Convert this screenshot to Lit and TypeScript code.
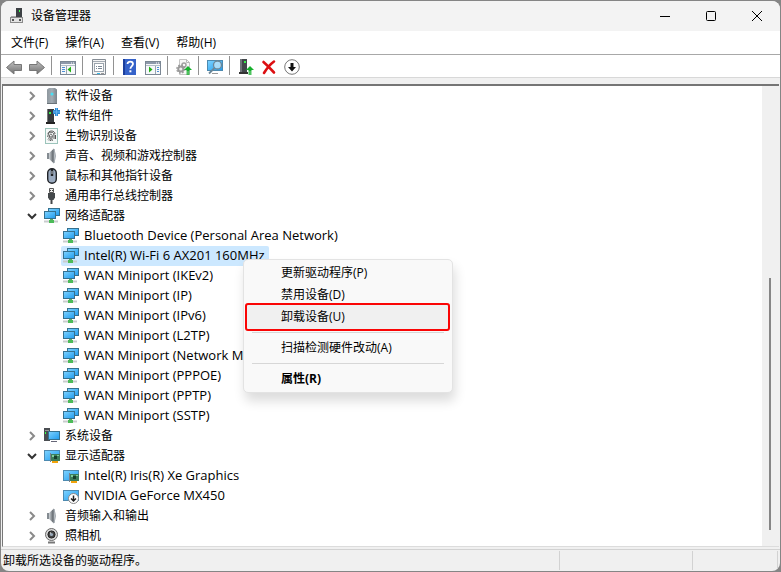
import { LitElement, html, svg, css, nothing } from "lit";
import { customElement, state } from "lit/decorators.js";
import { classMap } from "lit/directives/class-map.js";

const gradients = svg`
  <linearGradient id="sky" x1="0" y1="0" x2="1" y2="1"><stop offset="0" stop-color="#7fd3ff"/><stop offset="1" stop-color="#1e9bee"/></linearGradient>
  <linearGradient id="metal" x1="0" y1="0" x2="1" y2="0"><stop offset="0" stop-color="#8e979e"/><stop offset=".5" stop-color="#a4adb4"/><stop offset="1" stop-color="#7a838a"/></linearGradient>
  <linearGradient id="cone" x1="0" y1="0" x2="1" y2="0"><stop offset="0" stop-color="#cfd4d8"/><stop offset="1" stop-color="#4a5056"/></linearGradient>
  <linearGradient id="arrow" x1="0" y1="0" x2="0" y2="1"><stop offset="0" stop-color="#c2c2c2"/><stop offset="1" stop-color="#6f6f6f"/></linearGradient>`;

const greenUp = svg`<path d="M12 7l4 4h-2.500v1h-3v-1H8z" fill="#16b02c"/><path d="M10.500 13h3M10.500 15h3" stroke="#16b02c" stroke-width="1.300"/>`;
const pane = svg`<rect x=".5" y="2.500" width="15" height="13" fill="#f6f8fa" stroke="#7b8794"/><path d="M1 3h14v2H1z" fill="#8d98aa"/><path d="M11 4h1M13 4h1" stroke="#fff"/><path d="M1 6.500h14" stroke="#b3bdc8"/>`;
const screen = svg`<rect x=".5" y="2.500" width="15" height="10" fill="url(#sky)" stroke="#4d8ab0"/>`;
const card = svg`<path d="M6.500 5v9" stroke="#79838b"/><rect x="7" y="6" width="9" height="7" fill="#3d7d5b"/><path d="M8 7h2v2H8zM13 7h2v1h-2z" fill="#7fd09d"/><rect x="10" y="8" width="3" height="3" fill="#173f2c"/><path d="M8 13h6v2H8z" fill="#f1a30b"/>`;

const icons: Record<string, unknown> = {
  app: svg`<rect x="7" y="0" width="6" height="10" fill="#3d4145"/><rect x="10" y="2" width="1" height="2" fill="#3bff4c"/><rect x="1.500" y="9.500" width="12" height="5" fill="#e2e2e2" stroke="#8b8b8b"/><path d="M3 11h2v2H3zM10 11h2v2h-2z" fill="#555"/><path d="M2 8.500h5" stroke="#aaa"/>`,
  back: svg`<path d="M.5 8.500L8 2v3.500h7.500v6H8V15z" fill="url(#arrow)" stroke="#777"/>`,
  forward: svg`<path d="M15.500 8.500L8 2v3.500H.5v6H8V15z" fill="url(#arrow)" stroke="#777"/>`,
  tree: svg`${pane}<path d="M6.500 7v8" stroke="#9aa5b0"/><path d="M2 8.500h3M2 10.500h3M2 12.500h3" stroke="#4e8fd6"/><path d="M11 7.500v6L7.500 10.500z" fill="#22b014"/>`,
  props: svg`<path d="M1.500.5h13v15h-13z" fill="#f4f4f4" stroke="#858c94"/><path d="M2 2.500h12" stroke="#a4abb3"/><rect x="3.500" y="4.500" width="9" height="8" fill="#fff" stroke="#9ca5ae"/><path d="M5 7.500h1M7 7.500h4M5 9.500h1M7 9.500h4" stroke="#7b8794"/><path d="M6 14.500h3" stroke="#33b8ea"/><path d="M10 14.500h3" stroke="#999"/>`,
  help: svg`<rect x="1" y="0" width="13" height="16" fill="#3562c9"/><path d="M1 0h2v16H1z" fill="#1c3f9c"/><path d="M5.500 5c0-3.300 5.500-3.300 5.500 0 0 2-2.600 2.200-2.600 4.800" fill="none" stroke="#fff" stroke-width="1.800"/><rect x="7.400" y="11.300" width="2" height="2" fill="#fff"/>`,
  list: svg`${pane}<path d="M10.500 7v8" stroke="#9aa5b0"/><path d="M12 8.500h2M12 10.500h2M12 12.500h2" stroke="#4e8fd6"/><path d="M4 7.500v6L7.500 10.500z" fill="#22b014"/>`,
  update: svg`<path d="M3.500.5h7l3 3v12h-10z" fill="#f7f7f7" stroke="#c4c4c4"/><path d="M10.500.5v3h3" fill="none" stroke="#b7b7b7"/><circle cx="8" cy="6" r="2" fill="none" stroke="#a0a0a0" stroke-width="1.500"/><circle cx="4.800" cy="10" r="2.600" fill="#eee" stroke="#999" stroke-width="2"/><circle cx="4.800" cy="10" r="4" fill="none" stroke="#999" stroke-width="1.300" stroke-dasharray="1.700 1.440"/>${greenUp}`,
  scan: svg`<rect x=".5" y="1.500" width="15" height="10" fill="url(#sky)" stroke="#4d8ab0"/><path d="M5 14.500h6" stroke="#999"/><circle cx="10.500" cy="6" r="4" fill="#bfe6fb" fill-opacity=".8" stroke="#6c8798" stroke-width="1.300"/><path d="M7.500 9L2 14.500" stroke="#6c8798" stroke-width="1.800"/>`,
  driver: svg`<path d="M2 0h7v13H2z" fill="#43484c"/><path d="M2 0h2v13H2z" fill="#70757a"/><rect x="6" y="2" width="2" height="2" fill="#39f04b"/><path d="M1 14h9" stroke="#333" stroke-width="2"/>${greenUp}`,
  remove: svg`<path d="M2.500 3q4 3.500 10.500 10.500M13 2.500Q8 6 3 14" fill="none" stroke="#dc0f12" stroke-width="2.600" stroke-linecap="round"/>`,
  down: svg`<circle cx="8" cy="8" r="7.300" fill="#fff" stroke="#777"/><path d="M6.500 4h3v4H12l-4 4.500L4 8h2.500z" fill="#111"/>`,
  tower: svg`<path d="M3 1.500L5 0h6l2 1.500V15H3z" fill="url(#metal)"/><path d="M3 15.500h10" stroke="#6a7379"/><circle cx="8" cy="6" r="1.500" fill="#45e0f5"/>`,
  component: svg`<path d="M3 1h7v13H3z" fill="#363a3d"/><path d="M3 1h1v13H3z" fill="#777"/><path d="M2 15h9" stroke="#222" stroke-width="2"/><rect x="5" y="4" width="2" height="2" fill="#39f04b"/><path d="M9 2h2V0h3v2h2v4h-2v2h-3V6H9z" fill="#2e8ad4"/><path d="M12.500 0v8M9 4h7" stroke="#64b4ee"/>`,
  finger: svg`<rect x="1.500" y=".5" width="12" height="15" fill="#f5f9f8" stroke="#9cc4bb"/><path d="M4 6c0-4 7-4 7 0M3.500 9c1-1 0-3 2-4.500 1.700-1 4.500 0 4.500 2.500v4M4 11.500C6 10 5 8 5.800 6.700c.7-1 2.500-.5 2.500 1 0 2-.5 3.600-2.300 5.300M7 8c0 2-.4 3-2 4.500M11.500 7v4M8.500 11.500L8 13" fill="none" stroke="#555"/>`,
  speaker: svg`<path d="M3 5h2v6H3z" fill="#858c92"/><path d="M5 5l5-4.500v15L5 11z" fill="url(#cone)"/><path d="M10 1q3 7 0 14z" fill="#d3d7da" stroke="#a5acb2"/>`,
  mouse: svg`<rect x="3.700" y=".7" width="8.600" height="14.600" rx="4.300" fill="#9babc0" stroke="#202327" stroke-width="1.400"/><path d="M8 1v7" stroke="#202327" stroke-width="2.400"/><path d="M8 3v3" stroke="#c5ced8"/>`,
  usb: svg`<path d="M5.500.5h4v4h-4z" fill="#eee" stroke="#555"/><path d="M6 2.500h1M8 2.500h1" stroke="#444"/><path d="M4 5h7v4.500L9.500 12h-4L4 9.500z" fill="#44484b"/><path d="M7.500 12v4" stroke="#44484b" stroke-width="2"/>`,
  network: svg`<path d="M0 13.500h5M10 13.500h4" stroke="#c9ccce" stroke-width="2"/><path d="M5 12h5v3H5z" fill="#4cbb58"/><path d="M6 10h3v2H6z" fill="#5da868"/><rect x="4.500" y=".5" width="11" height="7" fill="url(#sky)" stroke="#35718f"/><rect x=".5" y="3.500" width="11" height="7" fill="url(#sky)" stroke="#35718f"/>`,
  system: svg`<path d="M0 0h6v13H0z" fill="#4a4e52"/><path d="M1 2.500h4" stroke="#999"/><rect x="1" y="4" width="1" height="2" fill="#3f4"/><rect x="4.500" y="3.500" width="11" height="8" fill="url(#sky)" stroke="#35718f"/><path d="M7 13.500h6" stroke="#667"/>`,
  display: svg`${screen}${card}`,
  disabled: svg`${screen}<circle cx="10.500" cy="10.500" r="5" fill="#fff" stroke="#888"/><path d="M10.500 7.500v5M8 10.500l2.500 2.500 2.500-2.500" fill="none" stroke="#222" stroke-width="1.500"/>`,
  camera: svg`<path d="M4 14.500h7" stroke="#777" stroke-width="2"/><circle cx="7.500" cy="6.500" r="6" fill="#dadada" stroke="#6a6a6a"/><circle cx="7.500" cy="6.500" r="3.600" fill="#444" stroke="#222"/><circle cx="7.500" cy="6.500" r="1.600" fill="#9ab"/><path d="M6 5h1" stroke="#fff"/>`,
};

const icon = (name: string) => html`<svg class="icon" viewBox="0 0 16 16" aria-hidden="true">
  <defs>${gradients}</defs>${icons[name]}
</svg>`;

interface Device { label: string; icon: string; selected?: boolean; }
interface Category { label: string; icon: string; open?: boolean; devices?: Device[]; }

const net = (label: string, selected = false): Device => ({ label, icon: "network", selected });

const categories: Category[] = [
  { label: "软件设备", icon: "tower" },
  { label: "软件组件", icon: "component" },
  { label: "生物识别设备", icon: "finger" },
  { label: "声音、视频和游戏控制器", icon: "speaker" },
  { label: "鼠标和其他指针设备", icon: "mouse" },
  { label: "通用串行总线控制器", icon: "usb" },
  {
    label: "网络适配器", icon: "network", open: true,
    devices: [
      net("Bluetooth Device (Personal Area Network)"),
      net("Intel(R) Wi-Fi 6 AX201 160MHz", true),
      net("WAN Miniport (IKEv2)"),
      net("WAN Miniport (IP)"),
      net("WAN Miniport (IPv6)"),
      net("WAN Miniport (L2TP)"),
      net("WAN Miniport (Network Monitor)"),
      net("WAN Miniport (PPPOE)"),
      net("WAN Miniport (PPTP)"),
      net("WAN Miniport (SSTP)"),
    ],
  },
  { label: "系统设备", icon: "system" },
  {
    label: "显示适配器", icon: "display", open: true,
    devices: [
      { label: "Intel(R) Iris(R) Xe Graphics", icon: "display" },
      { label: "NVIDIA GeForce MX450", icon: "disabled" },
    ],
  },
  { label: "音频输入和输出", icon: "speaker" },
  { label: "照相机", icon: "camera" },
];

const tools: [string, string][][] = [
  [["back", "后退"], ["forward", "前进"]],
  [["tree", "显示/隐藏控制台树"]],
  [["props", "属性"]],
  [["help", "帮助"], ["list", "显示/隐藏操作窗格"]],
  [["update", "更新驱动程序"]],
  [["scan", "扫描检测硬件改动"]],
  [["driver", "更新设备驱动程序"], ["remove", "卸载设备"], ["down", "禁用设备"]],
];

@customElement("app-root")
export class AppRoot extends LitElement {
  @state() private collapsed = new Set(categories.filter((c) => !c.open).map((c) => c.label));

  static styles = css`
    :host {
      display: flex;
      min-height: 100vh;
      box-sizing: border-box;
      background: #858585;
      padding: 1px;
      font: 12px/20px "Open Sans", "Noto Sans CJK SC", sans-serif;
      color: #000;
    }
    * { box-sizing: border-box; }
    button { font: inherit; color: inherit; background: none; border: 0; padding: 0; margin: 0; text-align: left; }
    ul { list-style: none; margin: 0; padding: 0; }
    .icon { width: 16px; height: 16px; display: block; flex: none; }
    .window { flex: 1; min-width: 0; display: flex; flex-direction: column; background: #f0f0f0; border-radius: 8px; overflow: hidden; }
    .titlebar { display: flex; align-items: center; height: 30px; background: #f3f3f3; padding-left: 8px; }
    .titlebar h1 { flex: 1; margin: 0 0 0 6px; font-size: 12px; font-weight: 400; }
    .control { width: 46px; height: 30px; display: grid; place-items: center; }
    .control svg { width: 12px; height: 12px; fill: none; stroke: #000; }
    .menubar { display: flex; gap: 1px; height: 24px; background: #fff; border-bottom: 1px solid #a8a8a8; padding-left: 2px; }
    .menubar button { padding: 0 8px; }
    .toolbar { display: flex; align-items: center; height: 23px; background: #fff; border-bottom: 1px solid #d8d8d8; padding-left: 1px; }
    .group { display: flex; }
    .group + .group::before { content: ""; width: 1px; height: 19px; margin: 0 4px 0 3px; background: #929292; }
    .group button { width: 23px; height: 20px; padding: 3px 3px 1px 4px; }
    .client { flex: 1; display: flex; margin: 6px 1px 2px 1px; border-top: 2px solid #757575; border-left: 1px solid #777; border-bottom: 1px solid #dcdcdc; background: #fff; }
    .tree { flex: 1; min-width: 0; position: relative; padding-left: 22px; }
    .row { display: flex; align-items: center; height: 20px; white-space: nowrap; }
    .expander { width: 14px; height: 20px; display: grid; place-items: center; margin-right: 5px; }
    .expander svg { width: 10px; height: 10px; fill: none; stroke: #8a8a8a; stroke-width: 2; }
    .expander.open svg { stroke: #333; }
    .label { padding: 0 4px 0 5px; }
    .device { width: max-content; margin-left: 36px; padding-left: 2px; border-radius: 2px; font-family: "Open Sans", "Noto Sans CJK SC", sans-serif; font-size: 13px; }
    .device .label { line-height: 18px; padding-bottom: 2px; }
    .device.selected { background: #cce8ff; }
    .scrollbar { width: 17px; background: #f0f0f0; display: grid; grid-template-rows: 192fr 252fr 16fr; }
    .thumb { grid-row: 2; width: 2px; margin-left: 7px; background: #868686; }
    .context {
      position: absolute; left: 240px; top: 173px; width: 210px; padding: 2px 1px;
      background: #f9f9f9; border: 1px solid #e3e3e3; border-radius: 5px;
      box-shadow: 2px 8px 12px rgba(0, 0, 0, 0.14);
    }
    .context button { display: block; width: 100%; height: 22px; line-height: 22px; padding-left: 36px; }
    .context .marked { width: 205px; height: 28px; margin: -3px 0; line-height: 24px; padding-left: 34px; border: 2px solid #fa0505; border-radius: 3px; background: #f0f0f0; position: relative; }
    .context hr { border: 0; height: 1px; background: #d7d7d7; margin: 4px 7px; }
    .context .default { font-weight: 700; }
    .status { display: flex; height: 22px; border-top: 1px solid #d2d2d2; padding: 1px 2px 0 0; }
    .status span { border-right: 1px solid #d2d2d2; height: 19px; padding-left: 2px; }
    .status .message { flex: 1; }
    .status .middle { width: 133px; }
    .status .end { width: 85px; }
  `;

  private toggle(label: string) {
    const next = new Set(this.collapsed);
    if (!next.delete(label)) next.add(label);
    this.collapsed = next;
  }

  private category(c: Category) {
    const open = !this.collapsed.has(c.label);
    return html`<li role="treeitem" aria-expanded=${open}>
      <div class="row">
        <button class=${classMap({ expander: true, open })} aria-label=${c.label} @click=${() => this.toggle(c.label)}>
          <svg viewBox="0 0 10 10"><path d=${open ? "M1 3l4 4 4-4" : "M3 1l4 4-4 4"} /></svg>
        </button>
        ${icon(c.icon)}<span class="label">${c.label}</span>
      </div>
      ${open && c.devices
        ? html`<ul role="group">${c.devices.map((d) => html`<li role="treeitem" aria-selected=${!!d.selected}
            class=${classMap({ row: true, device: true, selected: !!d.selected })}>${icon(d.icon)}<span class="label">${d.label}</span></li>`)}</ul>`
        : nothing}
    </li>`;
  }

  render() {
    return html`<div class="window">
      <header class="titlebar">
        ${icon("app")}
        <h1>设备管理器</h1>
        <button class="control" aria-label="最小化"><svg viewBox="0 0 12 12"><path d="M1 6.500h10" /></svg></button>
        <button class="control" aria-label="最大化"><svg viewBox="0 0 12 12"><rect x="1.500" y="1.500" width="9" height="9" rx="1" /></svg></button>
        <button class="control" aria-label="关闭"><svg viewBox="0 0 12 12"><path d="M1 1l10 10M11 1L1 11" /></svg></button>
      </header>
      <nav class="menubar">${["文件(F)", "操作(A)", "查看(V)", "帮助(H)"].map((m) => html`<button>${m}</button>`)}</nav>
      <div class="toolbar" role="toolbar">
        ${tools.map((g) => html`<div class="group">${g.map(([name, label]) => html`<button aria-label=${label}>${icon(name)}</button>`)}</div>`)}
      </div>
      <main class="client">
        <div class="tree">
          <ul role="tree">${categories.map((c) => this.category(c))}</ul>
          <div class="context" role="menu">
            <button role="menuitem">更新驱动程序(P)</button>
            <button role="menuitem">禁用设备(D)</button>
            <button role="menuitem" class="marked">卸载设备(U)</button>
            <hr />
            <button role="menuitem">扫描检测硬件改动(A)</button>
            <hr />
            <button role="menuitem" class="default">属性(R)</button>
          </div>
        </div>
        <div class="scrollbar"><div class="thumb"></div></div>
      </main>
      <footer class="status"><span class="message">卸载所选设备的驱动程序。</span><span class="middle"></span><span class="end"></span></footer>
    </div>`;
  }
}
